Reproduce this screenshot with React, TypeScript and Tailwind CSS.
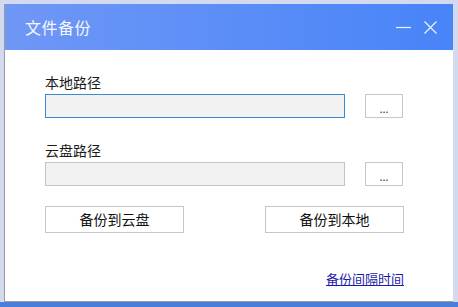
import React from "react";

const cjk = "font-['Microsoft_YaHei','Noto_Sans_CJK_SC',sans-serif]";

function PathField({ label, focused }: { label: string; focused?: boolean }) {
  return (
    <div className="flex flex-col">
      <div className="h-[20px] text-[14px] leading-[20px] text-[#1a1a1a]">{label}</div>
      <div className="mt-[2px] flex items-center">
        <div
          className={
            focused
              ? "h-[24px] w-[300px] border border-[#3c8ad0] bg-[#f2f2f2]"
              : "h-[24px] w-[300px] border border-[#c4c4c4] bg-[#f2f2f2]"
          }
        />
        <button className="ml-[20px] flex h-[24px] w-[38px] items-end justify-center border border-[#c6c6c6] bg-white pb-[3px] text-[11px] leading-[11px] text-[#333]">
          ...
        </button>
      </div>
    </div>
  );
}

export default function App() {
  return (
    <div className={`flex h-[307px] w-[458px] flex-col overflow-hidden bg-[#d3d9ef] ${cjk}`}>
      <div className="pl-[4px] pr-[5px] pt-[4px]">
        <div className="flex h-[298px] flex-col border-b border-l border-[#9c9c9c] bg-white">
          {/* title bar */}
          <div className="flex h-[46px] items-center bg-gradient-to-r from-[#6f97f6] to-[#4784f8] pl-[20px] pr-[16px]">
            <div className="text-[16px] tracking-[0.5px] text-[#f4f7ff]">文件备份</div>
            <div className="ml-auto flex items-center gap-[13px]">
              <svg width="15" height="12" viewBox="0 0 15 12">
                <line x1="0" y1="6.5" x2="15" y2="6.5" stroke="#eef3ff" strokeWidth="1.2" />
              </svg>
              <svg width="13" height="13" viewBox="0 0 13 13">
                <path d="M0.5 0.5 L12.5 12.5 M12.5 0.5 L0.5 12.5" stroke="#eef3ff" strokeWidth="1.2" />
              </svg>
            </div>
          </div>

          <div className="flex flex-1 flex-col pl-[40px] pr-[49px] pt-[22px]">
            <PathField label="本地路径" focused />
            <div className="mt-[22px]">
              <PathField label="云盘路径" />
            </div>

            <div className="mt-[20px] flex justify-between">
              <button className="h-[27px] w-[139px] border border-[#c6c6c6] bg-white text-[14px] text-[#111]">
                备份到云盘
              </button>
              <button className="h-[27px] w-[139px] border border-[#c6c6c6] bg-white text-[14px] text-[#111]">
                备份到本地
              </button>
            </div>

            <div className="mt-[37px] flex justify-end">
              <a className="text-[13px] leading-[18px] text-[#1b1ba8] underline">备份间隔时间</a>
            </div>
          </div>
        </div>
      </div>
      <div className="h-[5px] bg-[#4a7edb]" />
    </div>
  );
}
